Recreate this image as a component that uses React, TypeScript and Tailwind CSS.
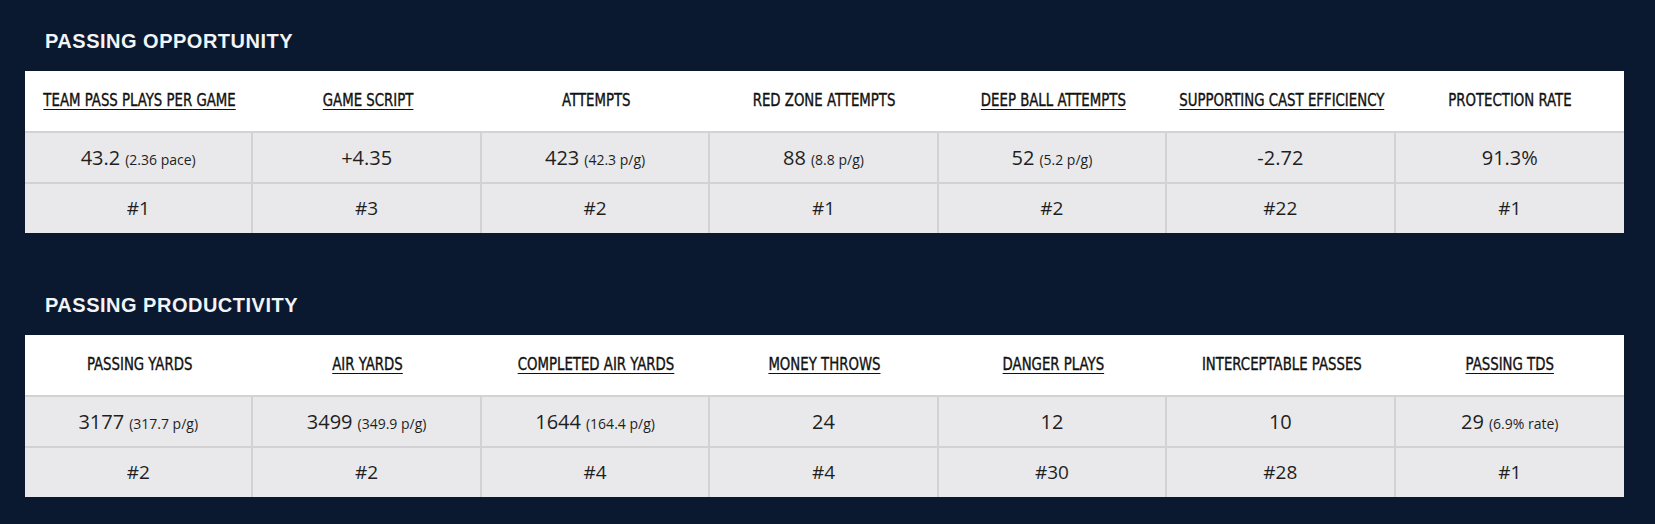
type Cell = { value: string; note?: string; rank: string };
type Column = { label: string; link?: boolean; cell: Cell };
type Section = { title: string; columns: Column[] };

const sections: Section[] = [
  {
    title: "PASSING OPPORTUNITY",
    columns: [
      { label: "TEAM PASS PLAYS PER GAME", link: true, cell: { value: "43.2", note: "(2.36 pace)", rank: "#1" } },
      { label: "GAME SCRIPT", link: true, cell: { value: "+4.35", rank: "#3" } },
      { label: "ATTEMPTS", cell: { value: "423", note: "(42.3 p/g)", rank: "#2" } },
      { label: "RED ZONE ATTEMPTS", cell: { value: "88", note: "(8.8 p/g)", rank: "#1" } },
      { label: "DEEP BALL ATTEMPTS", link: true, cell: { value: "52", note: "(5.2 p/g)", rank: "#2" } },
      { label: "SUPPORTING CAST EFFICIENCY", link: true, cell: { value: "-2.72", rank: "#22" } },
      { label: "PROTECTION RATE", cell: { value: "91.3%", rank: "#1" } },
    ],
  },
  {
    title: "PASSING PRODUCTIVITY",
    columns: [
      { label: "PASSING YARDS", cell: { value: "3177", note: "(317.7 p/g)", rank: "#2" } },
      { label: "AIR YARDS", link: true, cell: { value: "3499", note: "(349.9 p/g)", rank: "#2" } },
      { label: "COMPLETED AIR YARDS", link: true, cell: { value: "1644", note: "(164.4 p/g)", rank: "#4" } },
      { label: "MONEY THROWS", link: true, cell: { value: "24", rank: "#4" } },
      { label: "DANGER PLAYS", link: true, cell: { value: "12", rank: "#30" } },
      { label: "INTERCEPTABLE PASSES", cell: { value: "10", rank: "#28" } },
      { label: "PASSING TDS", link: true, cell: { value: "29", note: "(6.9% rate)", rank: "#1" } },
    ],
  },
];

const headFont = { fontFamily: "'DejaVu Sans Condensed', 'Liberation Sans', sans-serif" };

function StatTable({ columns }: { columns: Column[] }) {
  return (
    <div className="w-[1599px] grid grid-cols-7 bg-white">
      {columns.map((c) => (
        <div key={c.label} className="h-[62px] flex items-center justify-center border-b-2 border-[#d2d2d4]">
          <span
            className={`inline-block scale-x-[0.87] text-[17px] text-[#111] whitespace-nowrap [-webkit-text-stroke:0.35px_#111] ${c.link ? "underline underline-offset-[3px]" : ""}`}
            style={headFont}
          >
            {c.label}
          </span>
        </div>
      ))}
      {columns.map((c, i) => (
        <div
          key={c.label + "-v"}
          className={`h-[51px] flex items-center justify-center bg-[#e9e9eb] border-b-2 border-[#d2d2d4] ${i < 6 ? "border-r-2" : ""}`}
        >
          <span className="text-[20px] text-[#1f1f1f]">
            {c.cell.value}
            {c.cell.note && <span className="text-[14px] ml-[5px]">{c.cell.note}</span>}
          </span>
        </div>
      ))}
      {columns.map((c, i) => (
        <div
          key={c.label + "-r"}
          className={`h-[49px] flex items-center justify-center bg-[#e9e9eb] border-[#d2d2d4] ${i < 6 ? "border-r-2" : ""}`}
        >
          <span className="text-[19px] text-[#1f1f1f]">{c.cell.rank}</span>
        </div>
      ))}
    </div>
  );
}

export default function App() {
  return (
    <main
      className="min-h-screen bg-[#0a1930] pl-[25px] pr-[31px] pb-[27px]"
      style={{ fontFamily: "'Open Sans', 'Noto Sans', sans-serif" }}
    >
      {sections.map((s) => (
        <section key={s.title} className="pt-[28px] pb-[31px] last:pb-0">
          <h2
            className="h-[26px] leading-[26px] mb-[17px] pl-[20px] text-[20px] font-bold text-[#f2f4f7] tracking-[0.5px]"
            style={{ fontFamily: "'Liberation Sans', sans-serif" }}
          >
            {s.title}
          </h2>
          <StatTable columns={s.columns} />
        </section>
      ))}
    </main>
  );
}
